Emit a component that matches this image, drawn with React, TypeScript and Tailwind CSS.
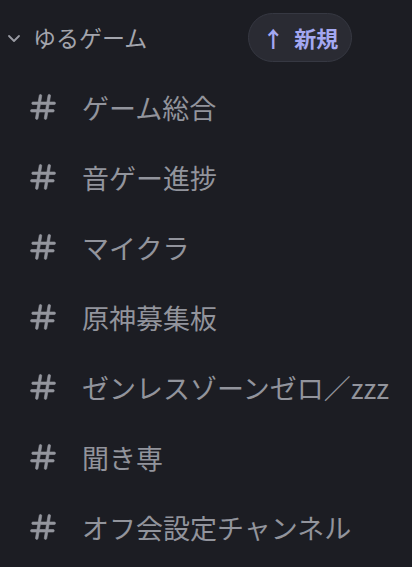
const channels = [
  'ゲーム総合',
  '音ゲー進捗',
  'マイクラ',
  '原神募集板',
  'ゼンレスゾーンゼロ／zzz',
  '聞き専',
  'オフ会設定チャンネル',
];

function HashIcon() {
  return (
    <svg width="30" height="30" viewBox="0 0 24 24" fill="currentColor" stroke="currentColor" strokeWidth="0.5" className="shrink-0">
      <path
        fillRule="evenodd"
        d="M10.99 3.16A1 1 0 1 0 9 2.84L8.15 8H4a1 1 0 0 0 0 2h3.82l-.67 4H3a1 1 0 1 0 0 2h3.82l-.8 4.84a1 1 0 0 0 1.97.32L8.85 16h4.97l-.8 4.84a1 1 0 0 0 1.97.32l.86-5.16H20a1 1 0 1 0 0-2h-3.82l.67-4H21a1 1 0 1 0 0-2h-3.82l.8-4.84a1 1 0 1 0-1.97-.32L15.15 8h-4.97l.8-4.84ZM14.15 14l.67-4H9.85l-.67 4h4.97Z"
      />
    </svg>
  );
}

export default function App() {
  return (
    <div
      className="w-[412px] h-[567px] bg-[#1c1d23] overflow-hidden"
      style={{ fontFamily: '"Noto Sans CJK JP", "Noto Sans", sans-serif' }}
    >
      {/* Category header */}
      <div className="flex items-center h-[72px] pt-[3px]">
        <svg width="14" height="14" viewBox="0 0 14 14" fill="none" stroke="#9a9ca4" strokeWidth="1.8" strokeLinecap="round" strokeLinejoin="round" className="ml-[7px] mr-[12px]">
          <path d="M2 5l5 5 5-5" />
        </svg>
        <span className="text-[23px] text-[#a3a5ad]">ゆるゲーム</span>
        <div className="ml-[101px] h-[49px] w-[104px] rounded-full bg-[#2a2b33] border border-[#363842] flex items-center justify-center gap-[10px] text-[#a4a8f2] font-bold text-[22px]">
          <span>↑</span>
          <span>新規</span>
        </div>
      </div>

      {/* Channels */}
      <div className="flex flex-col">
        {channels.map((name) => (
          <div key={name} className="flex items-center h-[70px]">
            <div className="ml-[28px] mr-[24px] text-[#94969e]">
              <HashIcon />
            </div>
            <span className="text-[27px] leading-none whitespace-nowrap text-[#92949c]">{name}</span>
          </div>
        ))}
      </div>
    </div>
  );
}
